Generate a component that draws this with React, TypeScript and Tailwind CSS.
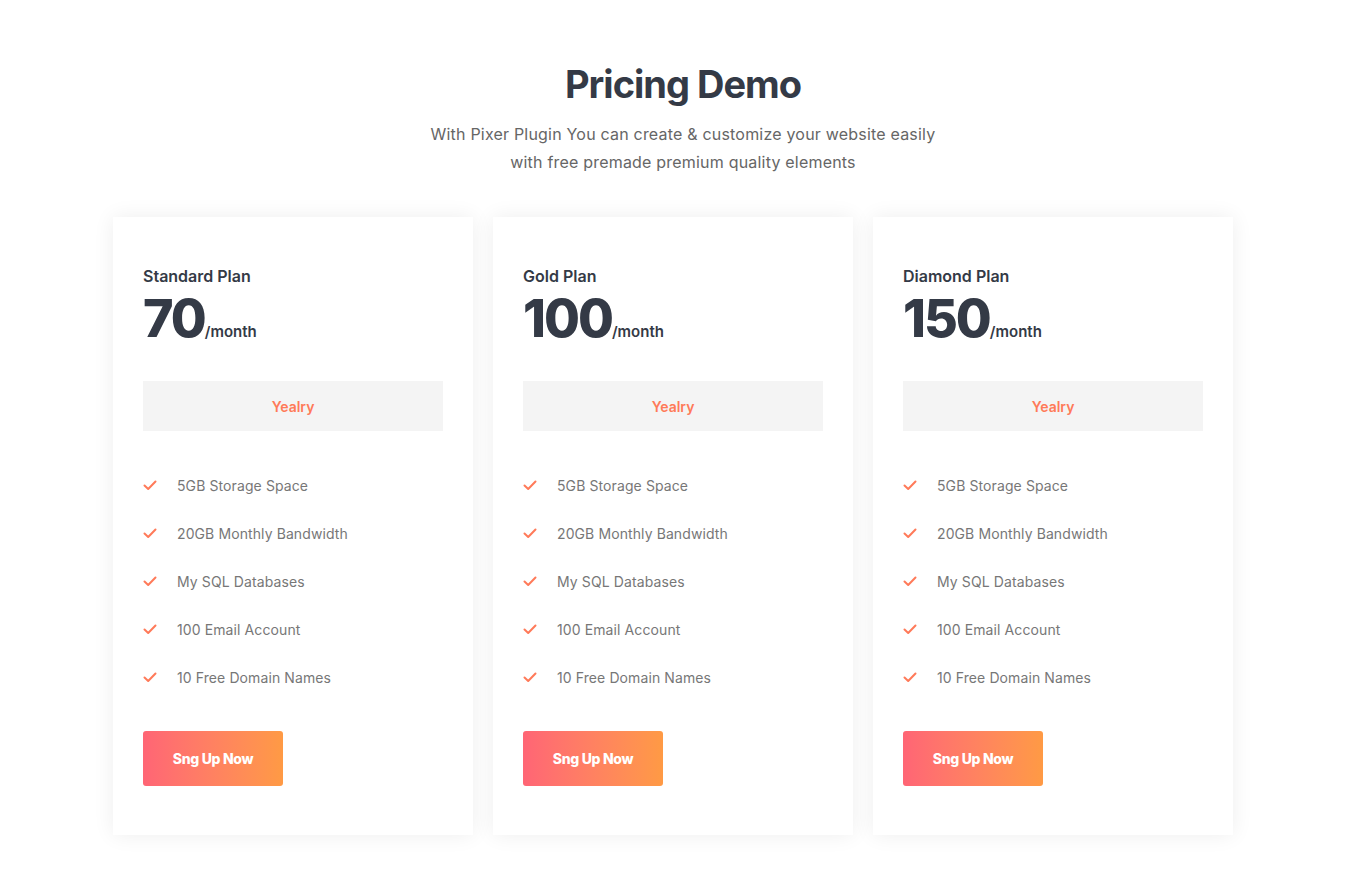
import React from "react";

const plans = [
  { name: "Standard Plan", price: "70" },
  { name: "Gold Plan", price: "100" },
  { name: "Diamond Plan", price: "150" },
];

const features = [
  "5GB Storage Space",
  "20GB Monthly Bandwidth",
  "My SQL Databases",
  "100 Email Account",
  "10 Free Domain Names",
];

function Check() {
  return (
    <svg width="14" height="11" viewBox="0 0 14 11" fill="none">
      <path d="M1.5 5.5L5.2 9L12.5 1.5" stroke="#ff7a59" strokeWidth="2" strokeLinecap="round" strokeLinejoin="round" />
    </svg>
  );
}

export default function App() {
  return (
    <div className="min-h-[892px] bg-white font-['Inter',sans-serif] pb-10">
      <div className="pt-[60px] text-center">
        <h1 className="text-[38px] leading-[48px] font-bold text-[#343a46] tracking-[-1px]">Pricing Demo</h1>
        <p className="mt-3 text-[16px] leading-[28px] text-[#666] tracking-[0.2px]">
          With Pixer Plugin You can create &amp; customize your website easily
          <br />
          with free premade premium quality elements
        </p>
      </div>
      <div className="w-[1140px] mx-auto mt-[41px] flex gap-5">
        {plans.map((plan) => (
          <div
            key={plan.name}
            className="w-[360px] bg-white shadow-[0_0_20px_rgba(0,0,0,0.07)] px-[30px] pt-[47px] pb-[49px]"
          >
            <div className="text-[16px] leading-6 font-semibold text-[#343a46]">{plan.name}</div>
            <div className="flex items-baseline mt-[6px] h-[50px]">
              <span className="text-[52px] leading-[50px] font-extrabold text-[#343a46] tracking-[-2px]">{plan.price}</span>
              <span className="text-[15px] font-semibold text-[#343a46]">/month</span>
            </div>
            <div className="mt-[37px] h-[50px] bg-[#f4f4f4] flex items-center justify-center text-[14px] font-semibold text-[#ff7a59]">
              Yealry
            </div>
            <ul className="mt-[30px]">
              {features.map((f) => (
                <li key={f} className="h-12 flex items-center gap-5 text-[14px] text-[#777] tracking-[0.1px]">
                  <Check />
                  <span>{f}</span>
                </li>
              ))}
            </ul>
            <button className="mt-[30px] w-[140px] h-[55px] rounded-[3px] bg-gradient-to-r from-[#ff6575] to-[#ff9a44] text-white text-[14px] font-extrabold tracking-[-0.3px]">
              Sng Up Now
            </button>
          </div>
        ))}
      </div>
    </div>
  );
}
